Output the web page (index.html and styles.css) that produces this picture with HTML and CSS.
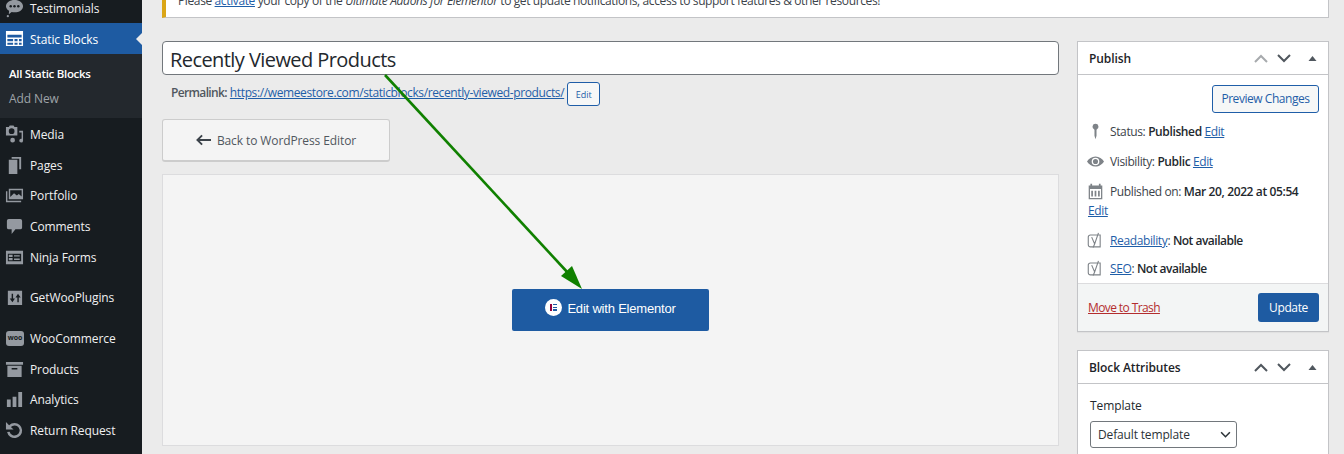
FILE: index.html
```html
<!DOCTYPE HTML>
<html lang="en">
  <head>
    <title>Edit Static Block</title>
    <meta charset="utf-8">
    <link rel="stylesheet" href="styles.css">
  </head>
  <body>

  <div id="wrap">
    <ul id="menu">
      <li class="item first"><svg class="ico" viewBox="0 0 20 20"><path d="M10 0c5 0 9 2.800 9 6.500S15 13 10 13c-1 0-2-.1-3-.4L4 15l.3-3.700C2.300 10.200 1 8.500 1 6.500 1 2.800 5 0 10 0z"/><circle cx="6" cy="6.500" r="1.300" fill="#171c20"/><circle cx="10" cy="6.500" r="1.300" fill="#171c20"/><circle cx="14" cy="6.500" r="1.300" fill="#171c20"/><circle cx="3" cy="17" r="1.200"/></svg>Testimonials</li>
      <li class="item current"><svg class="ico" viewBox="0 0 20 20"><path d="M1 2h18v16H1zM2.500 6v3h15V6zm0 4.500V13h6v-2.500zm7.500 0V13h3.200v-2.500zm4.700 0V13h2.800v-2.500zm-12.200 4v2h6v-2zm7.500 0v2h3.200v-2zm4.700 0v2h2.800v-2z" fill-rule="evenodd"/></svg>Static Blocks</li>
      <li class="submenu">
        <div class="sub-on">All Static Blocks</div>
        <div class="sub-off">Add New</div>
      </li>
      <li class="item"><svg class="ico" viewBox="0 0 20 20"><path d="M1 2h3l1-1.500h4L10 2h3v9H1zm6 1.500a3 3 0 1 0 0 6 3 3 0 0 0 0-6z" fill-rule="evenodd"/><path d="M15 6h4v10.500a2 2 0 1 1-1.500-2V8H15zM8 13.500a2.500 2.500 0 1 1 0 5 2.500 2.500 0 0 1 0-5z"/></svg>Media</li>
      <li class="item"><svg class="ico" viewBox="0 0 20 20"><path d="M7 1h10v13h-2V3H7zM4 4h9v15H4z"/></svg>Pages</li>
      <li class="item"><svg class="ico" viewBox="0 0 20 20"><path d="M4 3h15v11H4zm1.500 1.500v7l4-4 3 2.500 2-1.500 3 2.500v-6.500zM2.500 5.500V15.500H17V17H1V5.500z" fill-rule="evenodd"/></svg>Portfolio</li>
      <li class="item"><svg class="ico" viewBox="0 0 20 20"><path d="M4 2h12a2 2 0 0 1 2 2v7a2 2 0 0 1-2 2h-5l-4 5v-5H4a2 2 0 0 1-2-2V4a2 2 0 0 1 2-2z"/></svg>Comments</li>
      <li class="item"><svg class="ico" viewBox="0 0 20 20"><path d="M1 3h18v14H1zM3 6v8h14V6zm1 1h4v2.500H4zm0 3.500h4V13H4zM9.500 7.500h6V9h-6zm0 3.500h6v1.500h-6z" fill-rule="evenodd"/></svg>Ninja Forms</li>
      <li class="sep"></li>
      <li class="item"><svg class="ico" viewBox="0 0 20 20"><path d="M3 3h15v15H3zm4 3v5H5l2.800 4 2.700-4h-2V6zm6 9v-5h-2l2.700-4 2.800 4h-2v5z" fill-rule="evenodd"/></svg>GetWooPlugins</li>
      <li class="sep"></li>
      <li class="item"><span class="woo">woo</span>WooCommerce</li>
      <li class="item"><svg class="ico" viewBox="0 0 20 20"><path d="M1 2h18v3H1zM2.500 6v12h15V6zM7 8.500V10h6V8.500z" fill-rule="evenodd"/></svg>Products</li>
      <li class="item"><svg class="ico" viewBox="0 0 20 20"><path d="M2 10h4v8H2zM8 7h4v11H8zM14 2h4v16h-4z"/></svg>Analytics</li>
      <li class="item"><svg class="ico" viewBox="0 0 20 20"><path d="M10 2a8 8 0 1 1-7.800 9.700l2.700-.5A5.300 5.300 0 1 0 6.200 6.300L9 9H1V1l3.300 3.400A8 8 0 0 1 10 2z"/></svg>Return Request</li>
    </ul>

    <div id="content">
      <div class="notice">Please <a href="#">activate</a> your copy of the <em>Ultimate Addons for Elementor</em> to get update notifications, access to support features &amp; other resources!</div>

      <div class="columns">
        <div class="col-main">
          <div class="title-box">Recently Viewed Products</div>
          <div class="permalink">
            <strong>Permalink:</strong> <a href="#">https://wemeestore.com/staticblocks/recently-viewed-products/</a>
            <span class="edit-slug">Edit</span>
          </div>
          <div class="back-btn"><svg class="back-arrow" viewBox="0 0 16 12"><path d="M6.500 1L1.500 6l5 5M2 6h14" fill="none" stroke="#3c434a" stroke-width="2"/></svg>Back to WordPress Editor</div>
          <div class="editor-box">
            <div class="elementor-btn"><span class="e-logo"><i></i><i></i></span>Edit with Elementor</div>
          </div>
        </div>

        <div class="col-side">
          <div class="postbox publish">
            <div class="box-head">
              <h2>Publish</h2>
              <svg class="handles" viewBox="0 0 68 14"><path d="M6 11l6-6 6 6" class="faded"/><path d="M29 4l6 6 6-6"/><path class="tri" d="M59.500 10l4-5 4 5z"/></svg>
            </div>
            <div class="preview-row"><span class="preview-btn">Preview Changes</span></div>
            <div class="misc"><svg class="mi" viewBox="0 0 20 20"><path d="M10 1a3.500 3.500 0 0 1 1.200 6.800V15l-1.200 4-1.200-4V7.800A3.500 3.500 0 0 1 10 1z"/></svg>Status: <b>Published</b> <a href="#">Edit</a></div>
            <div class="misc vis"><svg class="mi" viewBox="0 0 20 20"><path d="M10 4c4.200 0 8 2.700 10 6-2 3.300-5.800 6-10 6S2 13.300 0 10c2-3.300 5.800-6 10-6zm0 1.500a4.500 4.500 0 1 0 0 9 4.500 4.500 0 0 0 0-9zm0 1.500a3 3 0 1 1 0 6 3 3 0 0 1 0-6z" fill-rule="evenodd"/></svg>Visibility: <b>Public</b> <a href="#">Edit</a></div>
            <div class="misc date"><svg class="mi" viewBox="0 0 20 20"><path d="M2 3h2V1h2v2h8V1h2v2h2v16H2zm1.500 4v10.500h13V7zM5 9h2v7H5zm4 0h2v7H9zm4 0h2v7h-2z" fill-rule="evenodd"/></svg>Published on: <b>Mar 20, 2022 at 05:54</b><br><a href="#">Edit</a></div>
            <div class="misc read"><svg class="mi" viewBox="0 0 20 20"><path class="yo" d="M5 3.500h10.500v14H4a2.500 2.500 0 0 1-2.500-2.500V6A2.500 2.500 0 0 1 4 3.500zM5.500 6l3.500 8L13.500 1M9 14l-2 4.500"/></svg><a href="#">Readability</a>: <b>Not available</b></div>
            <div class="misc score"><svg class="mi" viewBox="0 0 20 20"><path class="yo" d="M5 3.500h10.500v14H4a2.500 2.500 0 0 1-2.500-2.500V6A2.500 2.500 0 0 1 4 3.500zM5.500 6l3.500 8L13.500 1M9 14l-2 4.500"/></svg><a href="#">SEO</a>: <b>Not available</b></div>
            <div class="box-foot"><a class="trash" href="#">Move to Trash</a><span class="update-btn">Update</span></div>
          </div>

          <div class="postbox">
            <div class="box-head">
              <h2>Block Attributes</h2>
              <svg class="handles" viewBox="0 0 68 14"><path d="M6 11l6-6 6 6"/><path d="M29 4l6 6 6-6"/><path class="tri" d="M59.500 10l4-5 4 5z"/></svg>
            </div>
            <div class="attrs">
              <p>Template</p>
              <div class="select">Default template<svg class="caret" viewBox="0 0 12 8"><path d="M1 1.500l5 5 5-5" fill="none" stroke="#2c3338" stroke-width="1.800"/></svg></div>
            </div>
          </div>
        </div>
      </div>
    </div>
  </div>

  <svg id="arrow" viewBox="0 0 1344 454">
    <path d="M385 75L569 274" fill="none" stroke="#108000" stroke-width="2.600"/>
    <path d="M582 289L561 276 572 266z" fill="#108000"/>
  </svg>

  </body>
</html>
```

FILE: styles.css
```css
html, body {
  margin: 0;
  padding: 0;
  height: 454px;
  overflow: hidden;
}
body {
  background: #ebebeb;
  color: #3c434a;
  font-family: "Open Sans", sans-serif;
  font-size: 12px;
  letter-spacing: -0.1px;
  position: relative;
}
a {
  color: #1f5ea8;
}

#wrap {
  display: flex;
  height: 454px;
}

/* left admin menu */
#menu {
  list-style: none;
  margin: 0;
  padding: 0;
  width: 142px;
  flex: none;
  height: 454px;
  overflow: hidden;
  background: #171c20;
  color: #f0f0f1;
}
.item {
  height: 30.7px;
  box-sizing: border-box;
  padding: 2px 0 0 5px;
  display: flex;
  align-items: center;
  gap: 6px;
}
.first {
  height: 23px;
  padding-top: 1px;
  align-items: flex-start;
  line-height: 16px;
}
.first .ico {
  margin-top: -1px;
}
.ico {
  width: 19px;
  height: 19px;
  flex: none;
  fill: #9499a0;
}
.current {
  height: 31px;
  background: #1e5ba2;
  color: #fff;
  position: relative;
}
.current .ico {
  fill: #fff;
  margin-top: -2px;
}
.current:after {
  content: "";
  position: absolute;
  right: 0;
  top: 10px;
  border: 6px solid transparent;
  border-right-color: #ebebeb;
  border-left-width: 0;
}
.submenu {
  background: #23282d;
  height: 64px;
  padding: 7px 0 0 9px;
  box-sizing: border-box;
  line-height: 25px;
}
.sub-on {
  color: #fff;
  font-weight: 600;
  font-size: 11.500px;
  letter-spacing: -0.3px;
}
.sub-off {
  color: #9ea3a8;
}
.sep {
  height: 10px;
}
.woo {
  width: 18px;
  height: 15px;
  margin-left: 1px;
  flex: none;
  background: #9499a0;
  border-radius: 3px;
  color: #171c20;
  font-size: 7px;
  font-weight: 700;
  line-height: 14px;
  text-align: center;
}

/* main area */
#content {
  flex: 1;
  padding-left: 20px;
  min-width: 0;
  letter-spacing: -0.38px;
}
.notice {
  width: 1167px;
  height: 18px;
  box-sizing: border-box;
  background: #fff;
  border-left: 4px solid #dba617;
  border-bottom: 1px solid #c3c4c7;
  border-right: 1px solid #c3c4c7;
  padding-left: 12px;
  line-height: 2px;
  overflow: hidden;
}
.columns {
  display: flex;
  gap: 18px;
  margin-top: 23px;
}
.col-main {
  width: 897px;
  flex: none;
}
.col-side {
  width: 252px;
  flex: none;
}
.title-box {
  height: 34px;
  box-sizing: border-box;
  background: #fff;
  border: 1px solid #72777c;
  border-radius: 4px;
  color: #23282d;
  font-size: 20px;
  letter-spacing: -0.57px;
  line-height: 35px;
  padding-left: 7px;
}
.permalink {
  display: flex;
  align-items: center;
  gap: 3px;
  height: 24px;
  margin-top: 7px;
  padding-left: 9px;
  white-space: nowrap;
}
.permalink strong {
  color: #50575e;
  font-weight: 600;
  letter-spacing: -0.65px;
  margin-bottom: 3px;
}
.permalink a {
  margin-bottom: 3px;
}
.edit-slug {
  border: 1px solid #1f5ea8;
  border-radius: 3px;
  background: #f6f7f7;
  color: #1f5ea8;
  font-size: 9px;
  letter-spacing: 0;
  width: 31px;
  height: 22px;
  line-height: 24px;
  text-align: center;
}
.back-btn {
  width: 228px;
  height: 43px;
  box-sizing: border-box;
  margin-top: 13px;
  display: flex;
  align-items: center;
  justify-content: center;
  gap: 6px;
  background: #f4f4f4;
  border: 1px solid #ccc;
  border-bottom-width: 2px;
  border-radius: 3px;
  color: #50575e;
  letter-spacing: -0.1px;
}
.back-arrow {
  width: 15px;
  height: 12px;
}
.editor-box {
  height: 272px;
  box-sizing: border-box;
  margin-top: 12px;
  background: #f4f4f4;
  border: 1px solid #dcdcde;
  display: flex;
  align-items: center;
  justify-content: center;
}
.elementor-btn {
  width: 197px;
  height: 42px;
  box-sizing: border-box;
  padding-bottom: 3px;
  background: #1e5ba2;
  border-radius: 2px;
  color: #fff;
  font-family: "Liberation Sans", sans-serif;
  font-size: 13px;
  letter-spacing: -0.2px;
  display: flex;
  align-items: center;
  justify-content: center;
  gap: 5px;
}
.e-logo {
  width: 17px;
  height: 17px;
  border-radius: 50%;
  background: #fff;
  position: relative;
  margin-top: -2px;
}
.e-logo i {
  position: absolute;
  top: 5px;
  height: 7px;
}
.e-logo i:first-child {
  left: 5px;
  width: 2px;
  background: #92003b;
}
.e-logo i:last-child {
  left: 8px;
  width: 4px;
  background: repeating-linear-gradient(#1e5ba2 0, #1e5ba2 1.500px, #fff 1.500px, #fff 2.750px);
}

/* side boxes */
.postbox {
  background: #fff;
  border: 1px solid #c3c4c7;
  box-shadow: 0 1px 1px rgba(0,0,0,.04);
  color: #3c434a;
}
.publish {
  height: 291px;
  box-sizing: border-box;
  margin-bottom: 18px;
  position: relative;
}
.box-head {
  height: 33px;
  box-sizing: border-box;
  border-bottom: 1px solid #c3c4c7;
  display: flex;
  align-items: center;
  justify-content: space-between;
  padding: 0 11px;
}
.box-head h2 {
  margin: 0;
  font-size: 12px;
  font-weight: 600;
  letter-spacing: -0.1px;
  color: #1d2327;
}
.handles {
  width: 68px;
  height: 14px;
  margin-top: -1px;
}
.handles path {
  fill: none;
  stroke: #50575e;
  stroke-width: 2;
}
.handles .faded {
  stroke: #a7aaad;
}
.handles .tri {
  fill: #50575e;
  stroke: none;
}
.preview-row {
  display: flex;
  justify-content: flex-end;
  padding: 10px 9px 0 0;
}
.preview-btn {
  width: 107px;
  height: 28px;
  box-sizing: border-box;
  border: 1px solid #1f5ea8;
  border-radius: 3px;
  background: #f6f7f7;
  color: #1f5ea8;
  letter-spacing: -0.45px;
  line-height: 26px;
  text-align: center;
}
.misc {
  line-height: 19px;
  padding-left: 32px;
  position: relative;
  height: 19px;
  margin-top: 10px;
  white-space: nowrap;
}
.preview-row + .misc {
  margin-top: 9px;
}
.misc.vis {
  margin-top: 11px;
}
.misc b {
  font-weight: 600;
  letter-spacing: -0.38px;
  color: #23282d;
}
.misc.read b, .misc.score b {
  letter-spacing: -0.5px;
}
.misc.date {
  height: 38px;
  padding-left: 10px;
  text-indent: 22px;
  margin-top: 11px;
}
.misc.date + .misc {
  margin-top: 11px;
}
.misc.read + .misc {
  margin-top: 9px;
}
.misc.date a {
  display: inline-block;
  text-indent: 0;
}
.mi {
  position: absolute;
  left: 9px;
  top: 1px;
  width: 17px;
  height: 17px;
  fill: #7e8388;
}
.yo {
  fill: none;
  stroke: #7e8388;
  stroke-width: 1.300;
}
.box-foot {
  position: absolute;
  left: 0;
  right: 0;
  bottom: 0;
  height: 48px;
  box-sizing: border-box;
  background: #f3f5f5;
  border-top: 1px solid #dcdcde;
  display: flex;
  align-items: center;
  justify-content: space-between;
  padding: 0 9px 0 10px;
}
.trash {
  color: #b32d2e;
  letter-spacing: -0.6px;
}
.update-btn {
  width: 61px;
  height: 29px;
  background: #1e5ba2;
  border-radius: 3px;
  color: #fff;
  line-height: 29px;
  text-align: center;
}
.attrs {
  padding: 13px 12px 40px;
}
.attrs p {
  margin: 0 0 7px;
  line-height: 17px;
  color: #23282d;
  letter-spacing: -0.1px;
}
.select {
  width: 147px;
  height: 27px;
  box-sizing: border-box;
  border: 1px solid #72777c;
  border-radius: 3px;
  color: #2c3338;
  line-height: 25px;
  padding-left: 7px;
  position: relative;
  letter-spacing: -0.15px;
}
.caret {
  position: absolute;
  right: 5px;
  top: 9px;
  width: 11px;
  height: 7px;
}

/* annotation drawn over the screenshot */
#arrow {
  position: absolute;
  left: 0;
  top: 0;
  width: 1344px;
  height: 454px;
  pointer-events: none;
}
```
